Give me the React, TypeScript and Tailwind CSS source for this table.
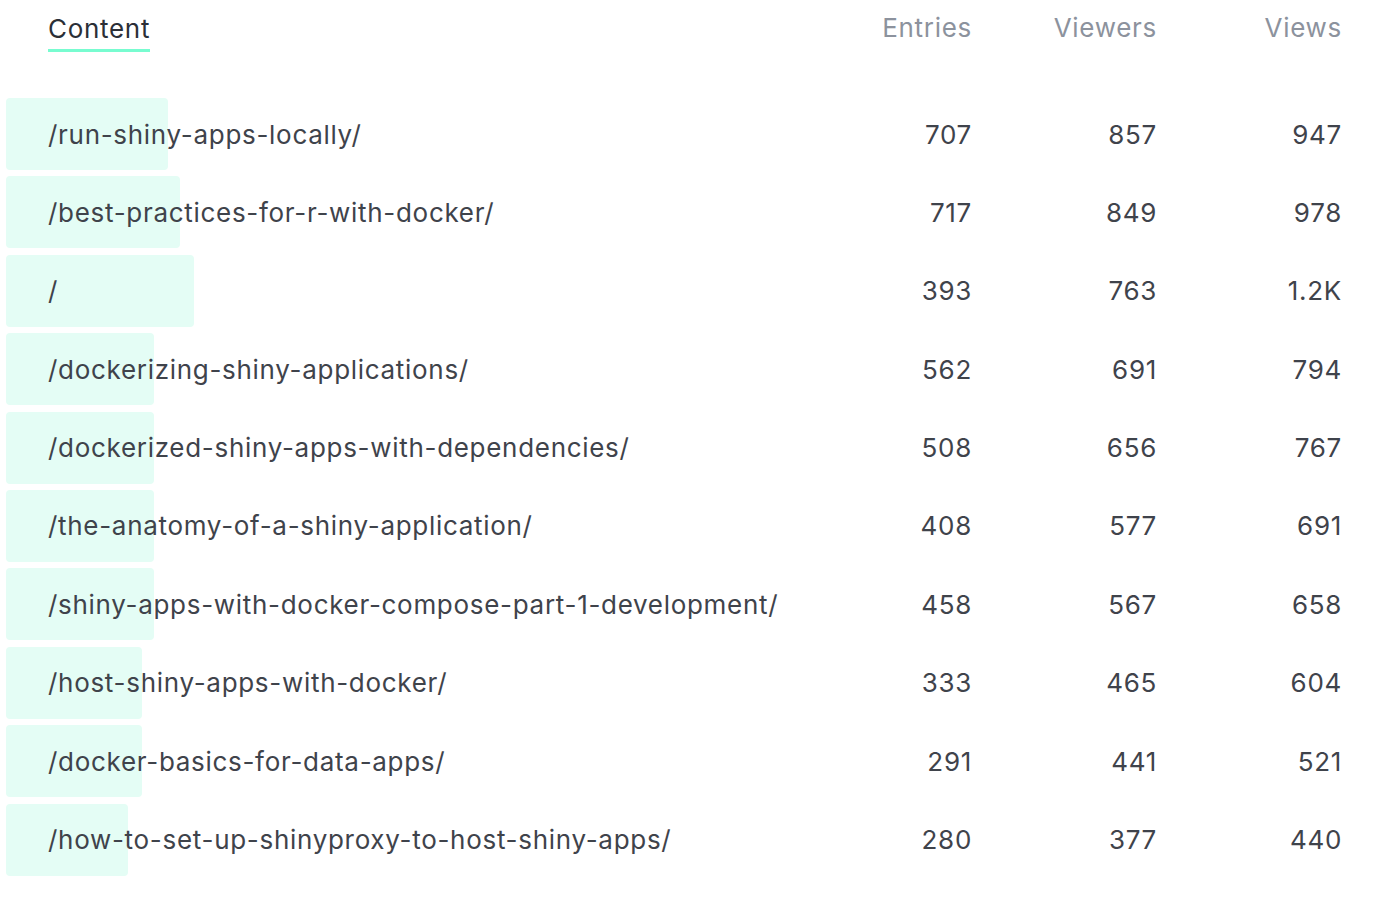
type Row = {
  path: string;
  entries: string;
  viewers: string;
  views: string;
  bar: number;
};

const rows: Row[] = [
  { path: "/run-shiny-apps-locally/", entries: "707", viewers: "857", views: "947", bar: 162 },
  { path: "/best-practices-for-r-with-docker/", entries: "717", viewers: "849", views: "978", bar: 174 },
  { path: "/", entries: "393", viewers: "763", views: "1.2K", bar: 188 },
  { path: "/dockerizing-shiny-applications/", entries: "562", viewers: "691", views: "794", bar: 148 },
  { path: "/dockerized-shiny-apps-with-dependencies/", entries: "508", viewers: "656", views: "767", bar: 148 },
  { path: "/the-anatomy-of-a-shiny-application/", entries: "408", viewers: "577", views: "691", bar: 148 },
  { path: "/shiny-apps-with-docker-compose-part-1-development/", entries: "458", viewers: "567", views: "658", bar: 148 },
  { path: "/host-shiny-apps-with-docker/", entries: "333", viewers: "465", views: "604", bar: 136 },
  { path: "/docker-basics-for-data-apps/", entries: "291", viewers: "441", views: "521", bar: 136 },
  { path: "/how-to-set-up-shinyproxy-to-host-shiny-apps/", entries: "280", viewers: "377", views: "440", bar: 122 },
];

const App = () => {
  return (
    <div className="min-h-screen bg-white font-['Inter',sans-serif] text-[26px] tracking-[0.7px] text-[#3f434b]">
      <div className="pl-[6px] pr-[40px]">
        <div className="flex h-[56px] items-start pt-[9px]">
          <div className="flex-1 pl-[42px]">
            <span className="inline-block border-b-[3px] border-[#78fcd0] pb-[1px] leading-[38px] text-[#2b2f37]">
              Content
            </span>
          </div>
          <div className="w-[185px] text-right leading-[38px] text-[#8c929d]">Entries</div>
          <div className="w-[185px] text-right leading-[38px] text-[#8c929d]">Viewers</div>
          <div className="w-[185px] text-right leading-[38px] text-[#8c929d]">Views</div>
        </div>

        <div className="mt-[42px] flex flex-col gap-[6.4px]">
          {rows.map((r) => (
            <div key={r.path} className="relative flex h-[72px] items-center">
              <div
                className="absolute left-0 top-0 h-full rounded-[4px] bg-[#e4fdf5]"
                style={{ width: r.bar }}
              />
              <div className="relative flex-1 pl-[42px]">{r.path}</div>
              <div className="relative w-[185px] text-right">{r.entries}</div>
              <div className="relative w-[185px] text-right">{r.viewers}</div>
              <div className="relative w-[185px] text-right">{r.views}</div>
            </div>
          ))}
        </div>
      </div>
    </div>
  );
};

export default App;
